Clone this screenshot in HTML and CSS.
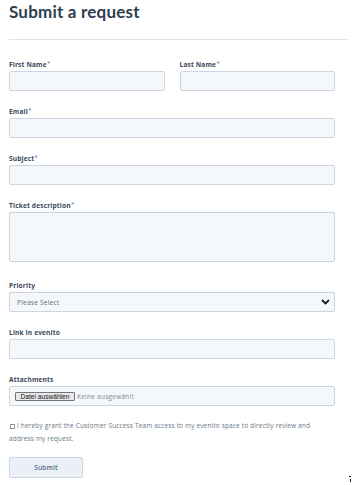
FILE: index.html
```html
<!DOCTYPE html>
<html lang="en">
<head>
<meta charset="utf-8">
<title>Submit a request</title>
<link rel="stylesheet" href="styles.css">
</head>
<body>
<div class="page">
  <h1 class="title">Submit a request</h1>
  <hr class="rule">
  <form class="form">
    <div class="row">
      <div class="field half">
        <label class="label">First Name<span class="req">*</span></label>
        <div class="input"></div>
      </div>
      <div class="field half">
        <label class="label">Last Name<span class="req">*</span></label>
        <div class="input"></div>
      </div>
    </div>
    <div class="field">
      <label class="label">Email<span class="req">*</span></label>
      <div class="input"></div>
    </div>
    <div class="field">
      <label class="label">Subject<span class="req">*</span></label>
      <div class="input"></div>
    </div>
    <div class="field field-tall">
      <label class="label">Ticket description<span class="req">*</span></label>
      <div class="input textarea"></div>
    </div>
    <div class="field">
      <label class="label">Priority</label>
      <div class="input select">
        <span class="placeholder">Please Select</span>
        <svg class="chev" width="9" height="6" viewBox="0 0 9 6"><path d="M1 1 L4.5 4.5 L8 1" fill="none" stroke="#1b1b1b" stroke-width="1.8"/></svg>
      </div>
    </div>
    <div class="field">
      <label class="label">Link in evenito</label>
      <div class="input"></div>
    </div>
    <div class="field">
      <label class="label">Attachments</label>
      <div class="input file">
        <span class="file-btn">Datei auswählen</span>
        <span class="file-none">Keine ausgewählt</span>
      </div>
    </div>
    <div class="consent">
      <span class="box"></span>I hereby grant the Customer Success Team access to my evenito space to directly review and address my request.
    </div>
    <div class="actions">
      <span class="submit">Submit</span>
    </div>
  </form>
  <span class="corner"></span>
</div>
</body>
</html>
```
FILE: styles.css
```css
html, body {
  margin: 0;
  padding: 0;
  background: #ffffff;
}
.page {
  position: relative;
  width: 353px;
  height: 485px;
  padding: 0 0 0 9px;
  box-sizing: border-box;
  font-family: "Open Sans", "Lato", sans-serif;
  color: #33475b;
  overflow: hidden;
}
.title {
  margin: 0;
  padding-top: 1px;
  height: 22px;
  line-height: 22px;
  font-family: "Lato", sans-serif;
  font-size: 17px;
  font-weight: 700;
  color: #2e3e50;
  letter-spacing: 0.2px;
}
.rule {
  margin: 16px 0 0 0;
  width: 339px;
  height: 0;
  border: 0;
  border-top: 1px solid #dfe4ec;
}
.form {
  display: flex;
  flex-direction: column;
  padding-top: 20px;
}
.row {
  display: flex;
  gap: 15px;
  width: 326px;
}
.field {
  display: flex;
  flex-direction: column;
  width: 326px;
  margin-bottom: 16px;
}
.half {
  width: 155.5px;
}
.field-tall {
  margin-bottom: 19px;
}
.label {
  display: block;
  height: 10px;
  line-height: 10px;
  font-size: 6.6px;
  font-weight: 700;
  letter-spacing: 0.15px;
  color: #3b4a5a;
  margin-bottom: 1px;
}
.req {
  color: #7a8896;
  font-size: 5px;
  vertical-align: top;
  line-height: 7px;
  margin-left: 0.5px;
}
.input {
  box-sizing: border-box;
  height: 20px;
  background: #f5f8fa;
  border: 1px solid #cbd6e2;
  border-radius: 2px;
}
.textarea {
  height: 50px;
}
.select {
  display: flex;
  align-items: center;
  justify-content: space-between;
  padding: 0 4px 0 7px;
}
.placeholder {
  font-size: 6.5px;
  letter-spacing: 0.25px;
  color: #5b6b7c;
}
.chev {
  display: block;
}
.file {
  display: flex;
  align-items: center;
  padding-left: 5px;
  gap: 2px;
}
.file-btn {
  box-sizing: border-box;
  height: 9px;
  width: 60px;
  line-height: 7px;
  text-align: center;
  font-family: "Liberation Sans", Arial, sans-serif;
  font-size: 6.6px;
  color: #111;
  background: #e9e9ed;
  border: 1px solid #767676;
  border-radius: 1px;
}
.file-none {
  font-size: 6.4px;
  letter-spacing: 0.3px;
  color: #7d8793;
}
.consent {
  margin-top: -3px;
  width: 326px;
  font-size: 6.5px;
  letter-spacing: 0.15px;
  line-height: 13px;
  color: #6b7886;
}
.box {
  display: inline-block;
  box-sizing: border-box;
  width: 5px;
  height: 5px;
  border: 1px solid #8e99a6;
  margin: 0 2px 0 1px;
  vertical-align: -0.5px;
}
.actions {
  display: flex;
  margin-top: 12px;
}
.submit {
  box-sizing: border-box;
  width: 74px;
  height: 21px;
  line-height: 19px;
  text-align: center;
  font-size: 6.6px;
  font-weight: 600;
  letter-spacing: 0.15px;
  color: #4f6a88;
  background: #eaf0f6;
  border: 1px solid #cbd6e2;
  border-radius: 2px;
}
.corner {
  position: absolute;
  left: 349px;
  top: 476px;
  width: 2px;
  height: 6px;
  border-top: 1px solid #222;
  box-sizing: border-box;
}
.corner::after {
  content: "";
  position: absolute;
  left: 1px;
  top: 2px;
  width: 1px;
  height: 3px;
  background: #222;
}
```
